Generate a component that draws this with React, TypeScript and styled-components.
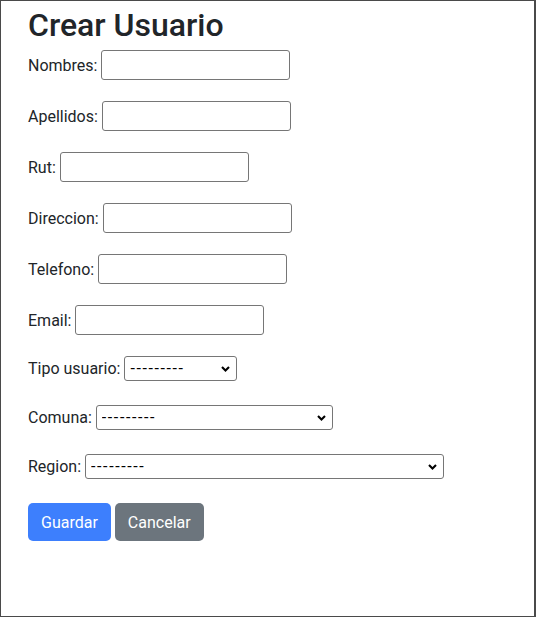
import React from "react";
import styled, { createGlobalStyle } from "styled-components";

const Global = createGlobalStyle`
  html, body { margin: 0; padding: 0; background: #fff; }
  *, *::before, *::after { box-sizing: border-box; }
  body { font-family: Roboto, "Noto Sans", sans-serif; color: #212529; font-size: 16px; }
`;

const Frame = styled.div`
  height: 617px;
  border: 1px solid #4a4a4a;
  border-right-width: 2px;
  padding: 0 0 0 27px;
  display: flex;
  flex-direction: column;
`;

const Title = styled.h1`
  margin: 0;
  height: 49px;
  padding-top: 5px;
  font-size: 32px;
  line-height: 38px;
  font-weight: 500;
  color: #212529;
`;

const Row = styled.div<{ $h: number }>`
  display: flex;
  align-items: center;
  gap: 4px;
  height: ${(p) => p.$h}px;
  margin-bottom: ${(p) => (p.$h === 30 ? 21 : 24)}px;
`;

const Label = styled.label`
  font-size: 16px;
  line-height: 24px;
  padding-top: 1px;
  color: #212529;
  white-space: nowrap;
`;

const TextInput = styled.input`
  width: 189px;
  height: 30px;
  border: 1px solid #767676;
  border-radius: 3px;
  padding: 1px 2px;
  font: inherit;
  background: #fff;
`;

const chevron =
  "data:image/svg+xml;utf8," +
  encodeURIComponent(
    '<svg xmlns="http://www.w3.org/2000/svg" width="9" height="6" viewBox="0 0 9 6"><path d="M1 1l3.5 3.5L8 1" fill="none" stroke="#000" stroke-width="2.1"/></svg>'
  );

const Select = styled.select<{ $w: number }>`
  appearance: none;
  -webkit-appearance: none;
  width: ${(p) => p.$w}px;
  height: 25px;
  border: 1px solid #767676;
  border-radius: 3px;
  padding: 0 20px 0 5px;
  font-family: Roboto, "Noto Sans", sans-serif;
  font-size: 16px;
  letter-spacing: 1.6px;
  color: #000;
  background: #fff url("${chevron}") no-repeat right 6px center;
`;

const Actions = styled.div`
  display: flex;
  gap: 4px;
`;

const Button = styled.button<{ $variant: "primary" | "secondary" }>`
  height: 38px;
  padding: 0 13px;
  border: none;
  border-radius: 5px;
  font-family: Roboto, "Noto Sans", sans-serif;
  font-size: 16px;
  color: #fff;
  background: ${(p) => (p.$variant === "primary" ? "#3d7ffd" : "#6c757d")};
`;

const inputs = ["Nombres", "Apellidos", "Rut", "Direccion", "Telefono", "Email"];
const selects: [string, number][] = [
  ["Tipo usuario", 113],
  ["Comuna", 237],
  ["Region", 359],
];

export default function App() {
  return (
    <>
      <Global />
      <Frame>
        <Title>Crear Usuario</Title>
        {inputs.map((n) => (
          <Row $h={30} key={n}>
            <Label>{n}:</Label>
            <TextInput type="text" />
          </Row>
        ))}
        {selects.map(([n, w]) => (
          <Row $h={25} key={n}>
            <Label>{n}:</Label>
            <Select $w={w} defaultValue="">
              <option value="">---------</option>
            </Select>
          </Row>
        ))}
        <Actions>
          <Button $variant="primary">Guardar</Button>
          <Button $variant="secondary">Cancelar</Button>
        </Actions>
      </Frame>
    </>
  );
}
